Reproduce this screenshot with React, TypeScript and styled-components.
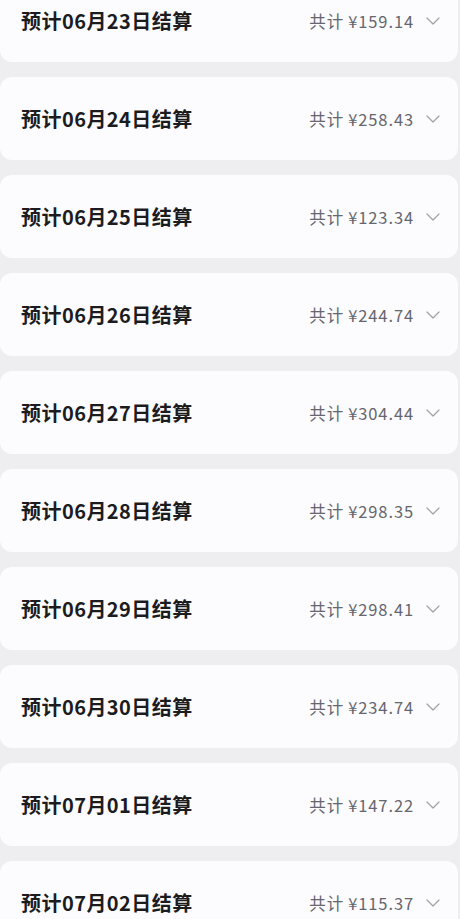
import styled, { createGlobalStyle } from 'styled-components';

const GlobalStyle = createGlobalStyle`
    html, body {
        margin: 0;
        padding: 0;
        background: #eeeef0;
    }
    body {
        font-family: "Noto Sans CJK SC", "Noto Sans", sans-serif;
        overflow: hidden;
    }
`;

const List = styled.div`
    display: flex;
    flex-direction: column;
    row-gap: 15px;
    margin-top: -21px;
    padding-right: 2px;
`;

const Card = styled.div`
    height: 83px;
    background-color: #fcfcfe;
    border-radius: 12px;
    display: flex;
    flex-direction: row;
    align-items: center;
    justify-content: space-between;
    padding: 0 18px 0 21px;
`;

const Title = styled.div`
    font-size: 20px;
    font-weight: 700;
    color: #1c1c1e;
    letter-spacing: 0.45px;
`;

const Summary = styled.div`
    display: flex;
    flex-direction: row;
    align-items: center;
    column-gap: 12px;
    color: #66666e;
    font-size: 16.5px;
    font-weight: 400;
    letter-spacing: 0.9px;
`;

const Currency = styled.span`
    margin-left: 4px;
`;

const Chevron = () => (
    <svg width="14" height="8" viewBox="0 0 14 8" fill="none">
        <path d="M1 1 L7 7 L13 1" stroke="#a0a0a8" strokeWidth="1.2" strokeLinecap="round" strokeLinejoin="round" />
    </svg>
);

const rows = [
    { date: '06月23日', total: '159.14' },
    { date: '06月24日', total: '258.43' },
    { date: '06月25日', total: '123.34' },
    { date: '06月26日', total: '244.74' },
    { date: '06月27日', total: '304.44' },
    { date: '06月28日', total: '298.35' },
    { date: '06月29日', total: '298.41' },
    { date: '06月30日', total: '234.74' },
    { date: '07月01日', total: '147.22' },
    { date: '07月02日', total: '115.37' },
];

const App = () => {
    return (
        <>
            <GlobalStyle />
            <List>
                {rows.map(row => (
                    <Card key={row.date}>
                        <Title>预计{row.date}结算</Title>
                        <Summary>
                            <span>共计<Currency>¥{row.total}</Currency></span>
                            <Chevron />
                        </Summary>
                    </Card>
                ))}
            </List>
        </>
    );
};

export default App;
